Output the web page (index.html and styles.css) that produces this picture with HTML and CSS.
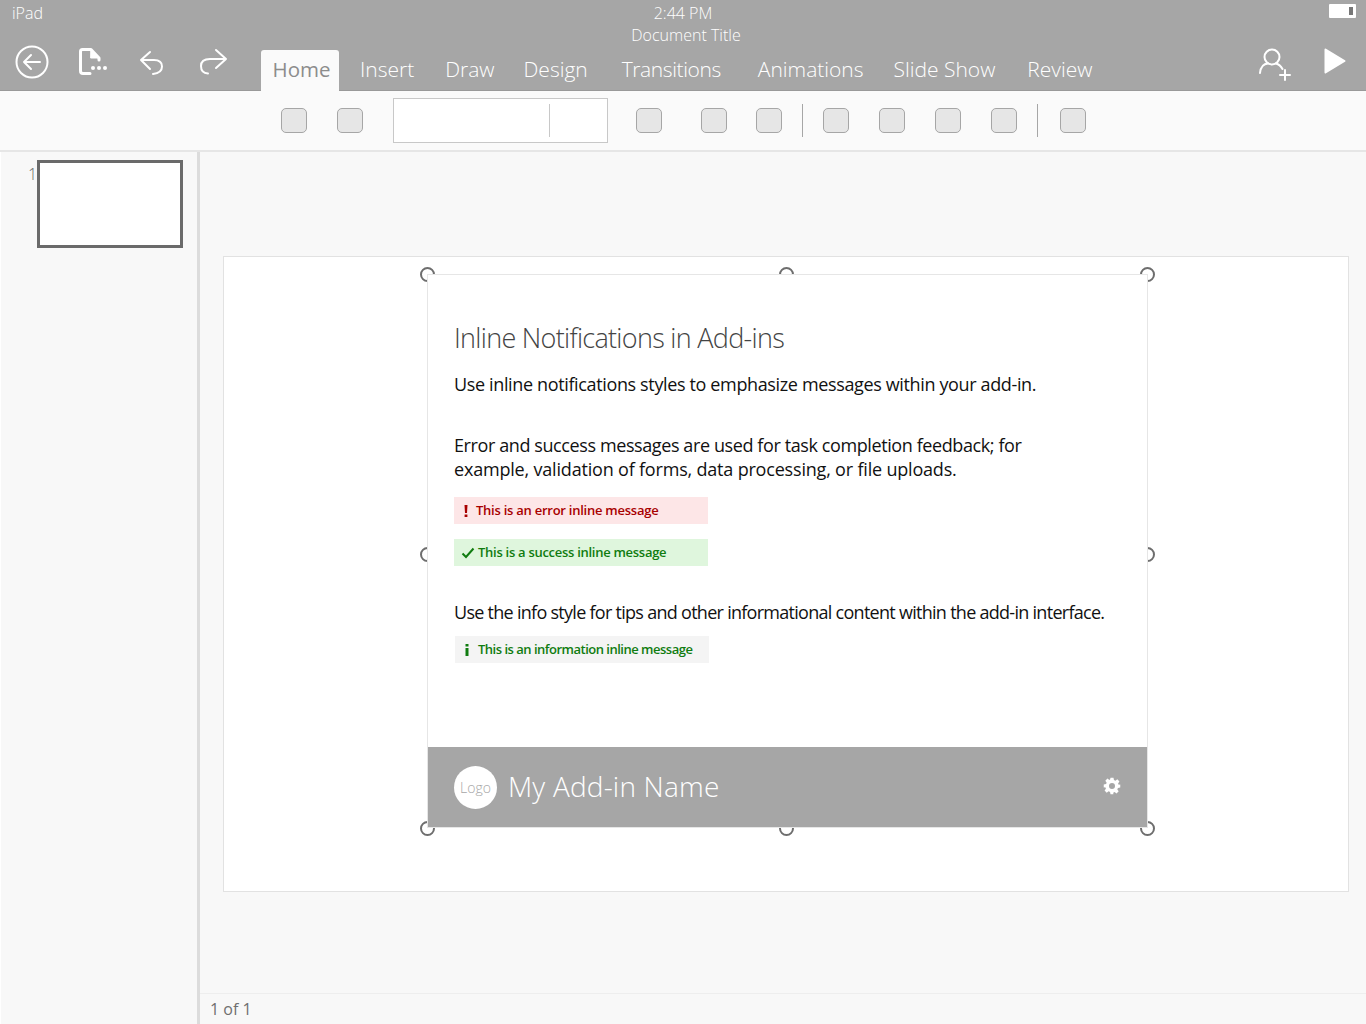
FILE: index.html
```html
<!DOCTYPE html>
<html lang="en">
<head>
  <meta charset="UTF-8" />
  <title>Inline Notifications in Add-ins</title>
  <link rel="stylesheet" href="styles.css">
</head>
<body>

  <header class="app-header">
    <div class="status-row">
      <span class="device">iPad</span>
      <div class="doc-info">
        <div>2:44 PM</div>
        <div class="doc-title">Document Title</div>
      </div>
      <span class="battery"><span class="battery-level"></span></span>
    </div>
    <div class="command-row">
      <svg class="icon icon-back" viewBox="0 0 34 34" width="34" height="34">
        <circle cx="17" cy="17" r="15.5"/>
        <path d="M25 17H9M16 10l-7 7 7 7"/>
      </svg>
      <svg class="icon icon-file" viewBox="0 0 30 28" width="30" height="28">
        <path d="M11 25.500H4Q1.500 25.500 1.500 23V3.500Q1.500 1.500 3.500 1.500H12L20 10V12"/>
        <path class="icon-fold" d="M12 1.500L20 10H12Z"/>
        <g class="icon-dots"><circle cx="14" cy="20" r="2"/><circle cx="20" cy="20" r="2"/><circle cx="26" cy="20" r="2"/></g>
      </svg>
      <svg class="icon icon-undo" viewBox="0 0 26 28" width="26" height="28">
        <path d="M11 4L2 12 11 21M2 12H15Q23 12 23 18.500T14 26"/>
      </svg>
      <svg class="icon icon-redo" viewBox="0 0 30 28" width="30" height="28">
        <path d="M17 2L27 11 17 20M27 11H11Q2 11 2 18T9 25.500"/>
      </svg>
      <nav class="tabs">
        <a class="tab active">Home</a>
        <a class="tab tab-insert">Insert</a>
        <a class="tab tab-draw">Draw</a>
        <a class="tab tab-design">Design</a>
        <a class="tab tab-transitions">Transitions</a>
        <a class="tab tab-animations">Animations</a>
        <a class="tab tab-slideshow">Slide Show</a>
        <a class="tab tab-review">Review</a>
      </nav>
      <svg class="icon icon-person" viewBox="0 0 34 34" width="34" height="34">
        <circle cx="14" cy="10" r="7.500"/>
        <path d="M2 26Q3 17 10 16.500M18 16.500Q22 17.500 24.500 22M27 23V33M22 28H32"/>
      </svg>
      <svg class="icon-play" viewBox="0 0 22 26" width="22" height="26">
        <path d="M1.500 1.500L20.500 13 1.500 24.500Z"/>
      </svg>
    </div>
  </header>

  <div class="ribbon">
    <span class="rb-btn"></span>
    <span class="rb-btn gap-30"></span>
    <div class="combo"><span class="combo-split"></span></div>
    <span class="rb-btn gap-28"></span>
    <span class="rb-btn gap-39"></span>
    <span class="rb-btn gap-29"></span>
    <span class="rb-sep"></span>
    <span class="rb-btn gap-20"></span>
    <span class="rb-btn gap-30"></span>
    <span class="rb-btn gap-30"></span>
    <span class="rb-btn gap-30"></span>
    <span class="rb-sep"></span>
    <span class="rb-btn gap-22"></span>
  </div>

  <div class="workspace">
    <aside class="thumbs">
      <span class="thumb-num">1</span>
      <div class="thumb"></div>
    </aside>

    <main class="editor">
      <div class="stage">
        <div class="slide">
          <div class="addin-frame">
            <span class="handle h-tl"></span>
            <span class="handle h-tc"></span>
            <span class="handle h-tr"></span>
            <span class="handle h-ml"></span>
            <span class="handle h-mr"></span>
            <span class="handle h-bl"></span>
            <span class="handle h-bc"></span>
            <span class="handle h-br"></span>

            <section class="addin">
              <div class="addin-body">
                <h1>Inline Notifications in Add-ins</h1>
                <p class="intro">Use inline notifications styles to emphasize messages within your add-in.</p>
                <p class="usage">
                  <span class="usage-line">Error and success messages are used for task completion feedback; for</span>
                  <span class="usage-line second">example, validation of forms, data processing, or file uploads.</span>
                </p>

                <div class="msg msg-error">
                  <svg class="msg-icon" viewBox="0 0 6 14" width="6" height="14"><path d="M1.500 1h3L4 9H2zM1.600 10.500h2.800V13H1.600z"/></svg>
                  <span class="msg-text">This is an error inline message</span>
                </div>
                <div class="msg msg-success">
                  <svg class="msg-icon" viewBox="0 0 14 12" width="14" height="12"><path d="M1.500 6.500L5 10l7.500-8.500"/></svg>
                  <span class="msg-text">This is a success inline message</span>
                </div>

                <p class="info-text">Use the info style for tips and other informational content within the add-in interface.</p>

                <div class="msg msg-info">
                  <svg class="msg-icon" viewBox="0 0 6 14" width="6" height="14"><path d="M1.500 1h3v2.500h-3zM1.500 5h3v8h-3z"/></svg>
                  <span class="msg-text">This is an information inline message</span>
                </div>
              </div>

              <footer class="addin-footer">
                <span class="logo">Logo</span>
                <span class="addin-name">My Add-in Name</span>
                <svg class="gear" viewBox="0 0 24 24" width="18" height="18">
                  <path fill-rule="evenodd" d="M10 1h4l.6 3.100 1.900.8 2.600-1.800 2.800 2.800-1.800 2.600.8 1.900L23 10v4l-3.100.6-.8 1.900 1.800 2.600-2.800 2.800-2.600-1.800-1.900.8L13.900 23H10l-.6-3.100-1.900-.8-2.600 1.800-2.800-2.800 1.800-2.600-.8-1.900L1 14v-4l3.100-.6.8-1.900L3.100 4.900l2.800-2.800 2.600 1.800 1-.8zM12 8a4 4 0 1 0 0 8 4 4 0 0 0 0-8z"/>
                </svg>
              </footer>
            </section>
          </div>
        </div>
      </div>
      <div class="page-count">1 of 1</div>
    </main>
  </div>

</body>
</html>
```

FILE: styles.css
```css
* {
  box-sizing: border-box;
}
html,
body {
  height: 100%;
}
body {
  margin: 0;
  display: flex;
  flex-direction: column;
  overflow: hidden;
  font-family: "Open Sans", "Noto Sans", sans-serif;
  background: #f8f8f8;
  color: #111;
}

/* header */
.app-header {
  height: 91px;
  background: #a6a6a6;
  color: #fff;
  border-bottom: 1px solid #999;
}
.status-row {
  height: 45px;
  padding: 2px 10px 0;
  display: grid;
  grid-template-columns: 1fr auto 1fr;
  font-size: 16px;
  line-height: 22px;
  font-weight: 300;
}
.device {
  justify-self: start;
  margin-left: 2px;
}
.doc-info {
  text-align: center;
}
.doc-title {
  margin-left: 6px;
}
.battery {
  justify-self: end;
  width: 27px;
  height: 14px;
  margin-top: 2px;
  padding: 3px 3px 3px 0;
  background: #fff;
  border-radius: 1px;
  display: flex;
  justify-content: flex-end;
}
.battery-level {
  width: 4px;
  background: #777;
}
.command-row {
  height: 45px;
  padding-left: 15px;
  padding-right: 20px;
  display: flex;
  align-items: flex-end;
}
.icon {
  flex: none;
  fill: none;
  stroke: #fff;
  stroke-width: 2;
  stroke-linecap: round;
  stroke-linejoin: round;
  align-self: flex-start;
}
.icon-file {
  margin: 3px 0 0 30px;
  stroke-width: 3;
}
.icon-fold {
  fill: #fff;
  stroke-width: 1;
}
.icon-dots {
  fill: #fff;
  stroke: none;
}
.icon-undo {
  margin: 3px 0 0 30px;
}
.icon-redo {
  margin: 3px 0 0 34px;
}
.icon-person {
  margin: 2px 0 0 auto;
}
.icon-play {
  flex: none;
  align-self: flex-start;
  margin: 3px 0 0 32px;
  fill: #fff;
  stroke: #fff;
  stroke-width: 2;
  stroke-linejoin: round;
}
.tabs {
  display: flex;
  align-items: flex-end;
  height: 40px;
  margin-left: 32px;
  font-size: 21px;
  font-weight: 300;
}
.tab {
  height: 40px;
  line-height: 39px;
  white-space: nowrap;
}
.tab.active {
  width: 78px;
  height: 41px;
  margin-bottom: -1px;
  padding-left: 3px;
  text-align: center;
  background: #fafafa;
  color: #8c8c8c;
  font-size: 20.5px;
  font-weight: 400;
  border-radius: 3px 3px 0 0;
}
.tab-insert { margin-left: 21px; }
.tab-draw { margin-left: 31px; }
.tab-design { margin-left: 29px; }
.tab-transitions { margin-left: 34px; letter-spacing: -0.4px; }
.tab-animations { margin-left: 37px; }
.tab-slideshow { margin-left: 30px; }
.tab-review { margin-left: 32px; }

/* ribbon */
.ribbon {
  height: 61px;
  padding-left: 281px;
  background: #fafafa;
  border-bottom: 2px solid #e6e6e6;
  display: flex;
  align-items: center;
}
.rb-btn {
  flex: none;
  width: 26px;
  height: 25px;
  background: #e6e6e6;
  border: 1px solid #a6a6a6;
  border-radius: 5px;
}
.gap-20 { margin-left: 20px; }
.gap-22 { margin-left: 22px; }
.gap-28 { margin-left: 28px; }
.gap-29 { margin-left: 29px; }
.gap-30 { margin-left: 30px; }
.gap-39 { margin-left: 39px; }
.combo {
  flex: none;
  width: 215px;
  height: 45px;
  margin-left: 30px;
  padding-left: 155px;
  display: flex;
  align-items: center;
  background: #fff;
  border: 1px solid #c8c8c8;
}
.combo-split {
  width: 1px;
  height: 33px;
  background: #c8c8c8;
}
.rb-sep {
  flex: none;
  width: 1px;
  height: 33px;
  margin-left: 20px;
  background: #a6a6a6;
}

/* workspace */
.workspace {
  flex: 1;
  display: flex;
  min-height: 0;
}
.thumbs {
  flex: none;
  width: 200px;
  padding: 8px 0 0 27px;
  display: flex;
  align-items: flex-start;
  border-left: 1px solid #fff;
  border-right: 3px solid #dcdcdc;
}
.thumb-num {
  width: 9px;
  font-size: 16px;
  line-height: 28px;
  font-weight: 300;
  color: #666;
}
.thumb {
  width: 146px;
  height: 88px;
  background: #fff;
  border: 3px solid #6a6a6a;
}
.editor {
  flex: 1;
  display: flex;
  flex-direction: column;
}
.stage {
  flex: 1;
  padding: 104px 17px 0 23px;
}
.slide {
  height: 636px;
  padding: 17px 0 0 203px;
  background: #fff;
  border: 1px solid #e2e2e2;
}
.page-count {
  height: 31px;
  padding-left: 10px;
  border-top: 1px solid #eee;
  font-size: 16px;
  line-height: 31px;
  color: #6f6f6f;
}

/* add-in pane */
.addin-frame {
  position: relative;
  width: 721px;
  height: 554px;
}
.handle {
  position: absolute;
  width: 15px;
  height: 15px;
  margin: -7px 0 0 -7px;
  border: 2px solid #6e6e6e;
  border-radius: 50%;
  background: #fff;
}
.h-tl { left: 0; top: 0; }
.h-tc { left: 359px; top: 0; }
.h-tr { left: 720px; top: 0; }
.h-ml { left: 0; top: 280px; }
.h-mr { left: 720px; top: 280px; }
.h-bl { left: 0; top: 554px; }
.h-bc { left: 359px; top: 554px; }
.h-br { left: 720px; top: 554px; }
.addin {
  position: relative;
  height: 100%;
  display: flex;
  flex-direction: column;
  background: #fff;
  border: 1px solid #e6e6e6;
}
.addin-body {
  flex: 1;
  padding: 43px 26px 0;
}
.addin-body h1 {
  margin: 0;
  font-size: 27px;
  line-height: 40px;
  font-weight: 300;
  letter-spacing: -0.7px;
  color: #444;
}
.addin-body p {
  margin: 0;
  font-size: 18px;
  line-height: 24px;
  white-space: nowrap;
}
.addin-body .intro {
  margin-top: 14px;
  letter-spacing: -0.36px;
}
.addin-body .usage {
  margin-top: 37px;
}
.usage-line {
  display: block;
  letter-spacing: -0.4px;
}
.usage-line.second {
  letter-spacing: -0.19px;
}
.addin-body .info-text {
  margin-top: 34px;
  letter-spacing: -0.72px;
}
.msg {
  width: 254px;
  height: 27px;
  padding-left: 7px;
  display: flex;
  align-items: center;
  font-size: 13px;
  font-weight: 600;
  white-space: nowrap;
}
.msg-text {
  padding-bottom: 2px;
}
.msg-icon {
  flex: none;
  margin-right: 3px;
}
.msg-error {
  margin-top: 16px;
  padding-left: 9px;
  letter-spacing: -0.25px;
  background: #fde6e7;
  color: #a80000;
}
.msg-error .msg-icon {
  fill: #a80000;
  margin-right: 7px;
}
.msg-success {
  margin-top: 15px;
  letter-spacing: -0.28px;
  background: #dff6dd;
  color: #107c10;
}
.msg-success .msg-icon {
  fill: none;
  stroke: #107c10;
  stroke-width: 2;
}
.msg-info {
  margin-top: 12px;
  margin-left: 1px;
  padding-left: 9px;
  letter-spacing: -0.5px;
  background: #f4f4f4;
  color: #107c10;
}
.msg-info .msg-icon {
  fill: #107c10;
  margin-right: 8px;
}
.addin-footer {
  flex: none;
  height: 80px;
  padding: 0 26px;
  display: flex;
  align-items: center;
  background: #a6a6a6;
  color: #fff;
}
.logo {
  flex: none;
  width: 43px;
  height: 43px;
  border-radius: 50%;
  background: #fff;
  color: #a6a6a6;
  font-size: 14px;
  line-height: 43px;
  font-weight: 300;
  text-align: center;
}
.addin-name {
  margin: 0 0 3px 11px;
  font-size: 28px;
  font-weight: 300;
  letter-spacing: 0.2px;
}
.gear {
  margin: 0 0 2px auto;
  fill: #fff;
}
```
